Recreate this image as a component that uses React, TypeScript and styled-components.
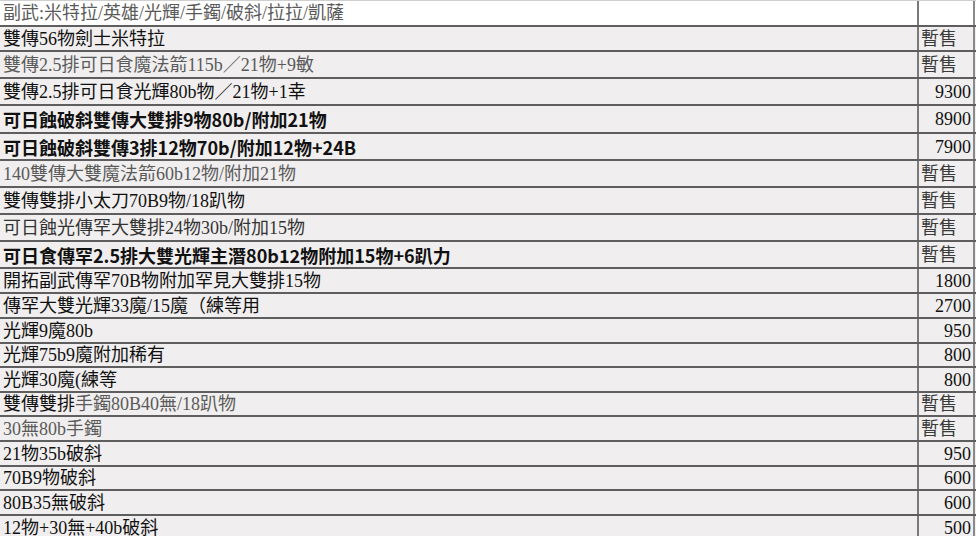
import React from "react";
import styled, { createGlobalStyle } from "styled-components";

type Tone = "serif" | "gray" | "soft" | "bold";

const Global = createGlobalStyle`
  body {
    margin: 0;
    background: #ffffff;
  }
`;

const Sheet = styled.div`
  width: 976px;
  height: 535px;
  overflow: hidden;
  border-top: 1px solid #cfcfcf;
  display: flex;
  flex-direction: column;
`;

const Row = styled.div<{ $h: number; $blank: boolean }>`
  flex: none;
  height: ${(p) => p.$h}px;
  box-sizing: border-box;
  display: grid;
  grid-template-columns: 917px 58px;
  background: ${(p) => (p.$blank ? "#ffffff" : "#f0eeee")};
  border-bottom: 2px solid #5e5e5e;
`;

const Name = styled.div<{ $tone: Tone }>`
  padding-left: 3px;
  display: flex;
  align-items: center;
  white-space: nowrap;
  overflow: hidden;
  font-size: 18px;
  line-height: 1;
  font-family: ${(p) =>
    p.$tone === "bold"
      ? '"Noto Sans CJK TC", "Noto Sans", sans-serif'
      : '"Liberation Serif", "Noto Sans CJK TC", serif'};
  font-weight: ${(p) => (p.$tone === "bold" ? 700 : 400)};
  color: ${(p) =>
    p.$tone === "gray" ? "#5a5a5a" : p.$tone === "soft" ? "#333333" : "#111111"};
`;

const Faded = styled.span`
  color: #5a5a5a;
`;

const Price = styled.div<{ $num: boolean }>`
  border-left: 2px solid #7a7a7a;
  border-right: 2px solid #8a8a8a;
  display: flex;
  align-items: center;
  justify-content: ${(p) => (p.$num ? "flex-end" : "flex-start")};
  padding: 0 2px;
  font-family: "Liberation Serif", "Noto Sans CJK TC", serif;
  font-size: 18px;
  line-height: 1;
  color: ${(p) => (p.$num ? "#111111" : "#3a3a3a")};
`;

type Item = {
  name: React.ReactNode;
  tone: Tone;
  price: string;
  h: number;
};

const items: Item[] = [
  { name: "副武:米特拉/英雄/光輝/手鐲/破斜/拉拉/凱薩", tone: "gray", price: "", h: 26 },
  { name: "雙傳56物劍士米特拉", tone: "serif", price: "暫售", h: 25 },
  { name: "雙傳2.5排可日食魔法箭115b／21物+9敏", tone: "gray", price: "暫售", h: 27 },
  { name: "雙傳2.5排可日食光輝80b物／21物+1幸", tone: "serif", price: "9300", h: 27 },
  { name: "可日蝕破斜雙傳大雙排9物80b/附加21物", tone: "bold", price: "8900", h: 28 },
  { name: "可日蝕破斜雙傳3排12物70b/附加12物+24B", tone: "bold", price: "7900", h: 27 },
  { name: "140雙傳大雙魔法箭60b12物/附加21物", tone: "gray", price: "暫售", h: 27 },
  { name: "雙傳雙排小太刀70B9物/18趴物", tone: "serif", price: "暫售", h: 27 },
  { name: "可日蝕光傳罕大雙排24物30b/附加15物", tone: "soft", price: "暫售", h: 27 },
  { name: "可日食傳罕2.5排大雙光輝主潛80b12物附加15物+6趴力", tone: "bold", price: "暫售", h: 27 },
  { name: "開拓副武傳罕70B物附加罕見大雙排15物", tone: "serif", price: "1800", h: 25 },
  { name: "傳罕大雙光輝33魔/15魔（練等用", tone: "serif", price: "2700", h: 25 },
  { name: "光輝9魔80b", tone: "serif", price: "950", h: 25 },
  { name: "光輝75b9魔附加稀有", tone: "serif", price: "800", h: 24 },
  { name: "光輝30魔(練等", tone: "serif", price: "800", h: 25 },
  {
    name: (
      <>
        雙傳雙排<Faded>手鐲80B40無/18趴物</Faded>
      </>
    ),
    tone: "serif",
    price: "暫售",
    h: 24,
  },
  { name: "30無80b手鐲", tone: "gray", price: "暫售", h: 25 },
  { name: "21物35b破斜", tone: "serif", price: "950", h: 25 },
  { name: "70B9物破斜", tone: "serif", price: "600", h: 24 },
  { name: "80B35無破斜", tone: "serif", price: "600", h: 25 },
  { name: "12物+30無+40b破斜", tone: "serif", price: "500", h: 26 },
];

export default function App() {
  return (
    <>
      <Global />
      <Sheet>
        {items.map((it, i) => (
          <Row key={i} $h={it.h} $blank={i === 0}>
            <Name $tone={it.tone}>{it.name}</Name>
            <Price $num={/^\d+$/.test(it.price)}>{it.price}</Price>
          </Row>
        ))}
      </Sheet>
    </>
  );
}
